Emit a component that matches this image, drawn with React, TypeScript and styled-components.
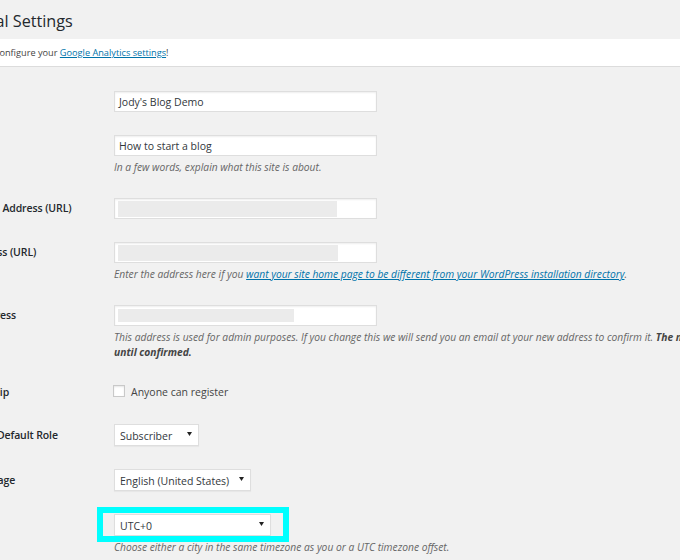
import React from 'react';
import styled, { createGlobalStyle } from 'styled-components';

const GlobalStyle = createGlobalStyle`
  html, body {
    margin: 0;
    width: 680px;
    height: 560px;
    overflow: hidden;
    background: #f1f1f1;
  }
  body {
    font-family: "Open Sans", "Noto Sans", sans-serif;
    font-size: 10.5px;
    color: #444;
  }
`;

const Arrow = () => (
  <ArrowIcon width="5" height="4" viewBox="0 0 5 4" aria-hidden="true">
    <path d="M0 0 H5 L2.5 4 Z" fill="#222" />
  </ArrowIcon>
);

const App = () => (
  <>
    <GlobalStyle />
    <Wrap>
      <Title>General Settings</Title>
      <Notice>
        Please configure your <Link href="#">Google Analytics settings</Link>!
      </Notice>

      <FormTable>
        <Row>
          <Label>Site Title</Label>
          <Cell>
            <TextField>Jody's Blog Demo</TextField>
          </Cell>
        </Row>

        <Row>
          <Label>Tagline</Label>
          <Cell>
            <TextField>How to start a blog</TextField>
            <Description>In a few words, explain what this site is about.</Description>
          </Cell>
        </Row>

        <Row>
          <Label>WordPress Address (URL)</Label>
          <Cell>
            <TextField>
              <Redacted $width={219} />
            </TextField>
          </Cell>
        </Row>

        <Row>
          <Label>Site Address (URL)</Label>
          <Cell>
            <TextField>
              <Redacted $width={220} />
            </TextField>
            <Description>
              Enter the address here if you{' '}
              <Link href="#">
                want your site home page to be different from your WordPress installation directory
              </Link>
              .
            </Description>
          </Cell>
        </Row>

        <Row>
          <Label>Email Address</Label>
          <Cell>
            <TextField>
              <Redacted $width={176} $short />
            </TextField>
            <Description>
              This address is used for admin purposes. If you change this we will send you an email at
              your new address to confirm it. <strong>The new address will not become active</strong>
              <br />
              <strong>until confirmed.</strong>
            </Description>
          </Cell>
        </Row>

        <Row>
          <Label $lineHeight={18}>Membership</Label>
          <Cell>
            <CheckLabel>
              <Checkbox />
              Anyone can register
            </CheckLabel>
          </Cell>
        </Row>

        <Row>
          <Label $lineHeight={22}>New User Default Role</Label>
          <Cell>
            <SelectBox $width={85}>
              Subscriber
              <Arrow />
            </SelectBox>
          </Cell>
        </Row>

        <Row>
          <Label $lineHeight={22}>Site Language</Label>
          <Cell>
            <SelectBox $width={137}>
              English (United States)
              <Arrow />
            </SelectBox>
          </Cell>
        </Row>

        <Row>
          <Label $lineHeight={22}>Timezone</Label>
          <Cell>
            <Highlight>
              <SelectBox $width={157}>
                UTC+0
                <Arrow />
              </SelectBox>
            </Highlight>
            <Description>Choose either a city in the same timezone as you or a UTC timezone offset.</Description>
          </Cell>
        </Row>
      </FormTable>
    </Wrap>
  </>
);

const Wrap = styled.div`
  width: 1100px;
  margin-left: -51px;
`;

const Title = styled.h1`
  margin: 0 0 7px;
  padding-top: 10px;
  font-size: 16.2px;
  font-weight: 400;
  line-height: 22px;
  color: #23282d;
`;

const Notice = styled.div`
  background: #fff;
  border-left: 4px solid #00a0d2;
  border-bottom: 1px solid #dcdcdc;
  padding: 6px 12px;
  font-size: 9.2px;
  line-height: 15px;
  color: #444;
`;

const Link = styled.a`
  color: #0073aa;
  text-decoration: underline;
`;

const FormTable = styled.div`
  margin: 12px 0 0 -3px;
  display: flex;
  flex-direction: column;
`;

const Row = styled.div`
  display: grid;
  grid-template-columns: 168px 1fr;
  align-items: start;
  padding: 12px 0 11px;
`;

const Label = styled.div<{ $lineHeight?: number }>`
  font-weight: 600;
  letter-spacing: -0.1px;
  color: #23282d;
  line-height: ${({ $lineHeight }) => $lineHeight ?? 21}px;
  white-space: nowrap;
`;

const Cell = styled.div`
  display: flex;
  flex-direction: column;
  align-items: flex-start;
`;

const TextField = styled.div`
  box-sizing: border-box;
  width: 263px;
  height: 21px;
  padding: 0 4px;
  display: flex;
  align-items: center;
  background: #fff;
  border: 1px solid #dedede;
  box-shadow: inset 0 1px 2px rgba(0, 0, 0, 0.07);
  color: #32373c;
  white-space: nowrap;
`;

const Redacted = styled.span<{ $width: number; $short?: boolean }>`
  display: block;
  width: ${({ $width }) => $width}px;
  height: ${({ $short }) => ($short ? 13 : 16)}px;
  margin-left: -1px;
  background: #ebebeb;
`;

const Description = styled.p`
  margin: 4px 0 0;
  font-size: 10.25px;
  font-style: italic;
  line-height: 15px;
  color: #666;
  white-space: nowrap;

  strong {
    font-weight: 700;
    color: #444;
  }
`;

const CheckLabel = styled.label`
  display: flex;
  align-items: center;
  gap: 6px;
  line-height: 18px;
  color: #444;
`;

const Checkbox = styled.span`
  box-sizing: border-box;
  width: 12px;
  height: 12px;
  margin-left: -1px;
  margin-top: -2px;
  background: #fff;
  border: 1px solid #c9c9c9;
  box-shadow: inset 0 1px 2px rgba(0, 0, 0, 0.1);
`;

const SelectBox = styled.div<{ $width: number }>`
  box-sizing: border-box;
  width: ${({ $width }) => $width}px;
  height: 22px;
  padding: 2px 6px 0 5px;
  display: flex;
  align-items: center;
  justify-content: space-between;
  background: #fff;
  border: 1px solid #dedede;
  box-shadow: 0 1px 1px rgba(0, 0, 0, 0.04);
  color: #32373c;
  white-space: nowrap;
`;

const ArrowIcon = styled.svg`
  flex: none;
  margin-top: -4px;
`;

const Highlight = styled.div`
  position: relative;

  &::after {
    content: '';
    position: absolute;
    top: -7px;
    right: -18px;
    bottom: -6px;
    left: -17px;
    border: 6px solid #00ffff;
    pointer-events: none;
  }
`;

export default App;
